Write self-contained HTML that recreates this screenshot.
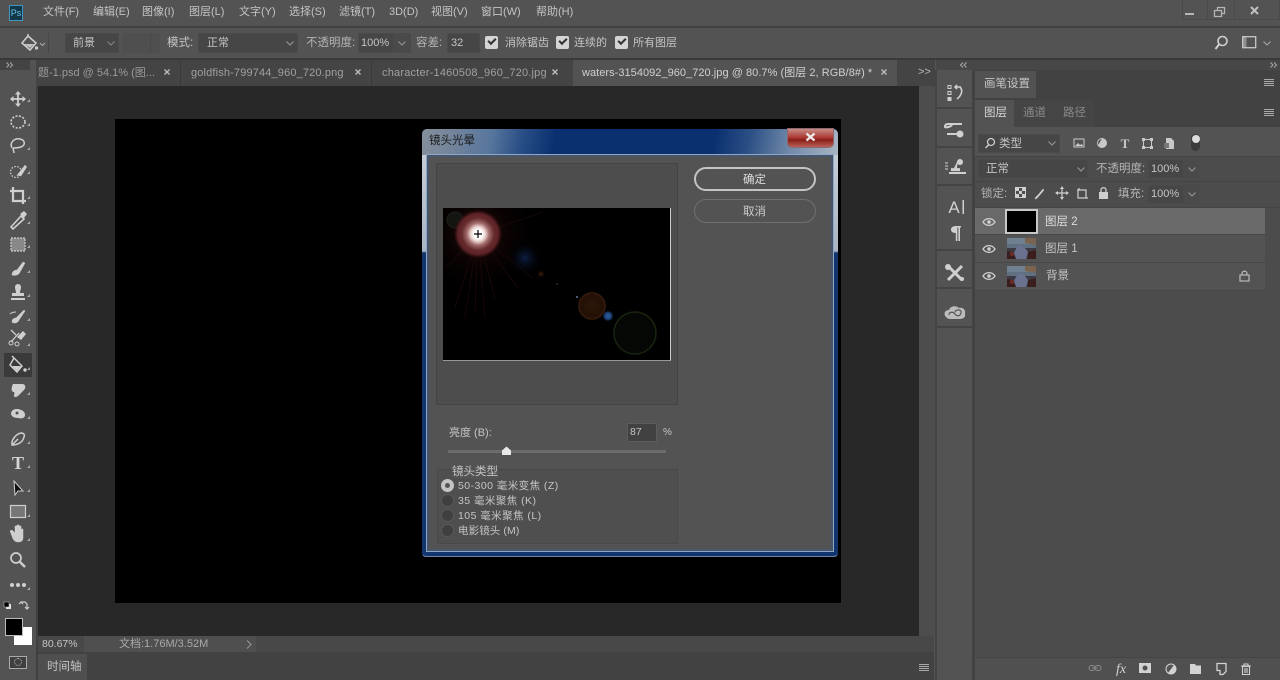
<!DOCTYPE html>
<html><head><meta charset="utf-8"><style>
html,body{margin:0;padding:0;width:1280px;height:680px;overflow:hidden;background:#535353}
body{position:relative;font-family:"Liberation Sans","Noto Sans CJK SC",sans-serif;font-size:11px;color:#c4c4c4;filter:blur(.35px)}
.a,.t{position:absolute}
.t{white-space:nowrap;line-height:14px}
svg{position:absolute;overflow:visible}
.f{background:#464646;border:1px solid #4a4a4a;box-sizing:border-box}
.ck{position:absolute;width:13px;height:13px;background:#d4d4d4;border-radius:2px}
.ck:after{content:"";position:absolute;left:3px;top:2px;width:6px;height:3px;border-left:2px solid #333;border-bottom:2px solid #333;transform:rotate(-45deg)}
.r{position:absolute;width:11px;height:11px;border-radius:50%;background:#3f3f3f;border:1px solid #585858;left:441px}
</style></head><body>

<!-- bars -->
<div class="a" style="left:0;top:26px;width:1280px;height:2px;background:#424242"></div>
<div class="a" style="left:0;top:58px;width:1280px;height:2px;background:#3a3a3a"></div>
<div class="a" style="left:0;top:60px;width:935px;height:26px;background:#444"></div>
<div class="a" style="left:936px;top:60px;width:344px;height:10px;background:#474747"></div>
<div class="a" style="left:0;top:60px;width:36px;height:620px;background:#535353"></div>
<div class="a" style="left:0;top:60px;width:30px;height:10px;background:#444"></div>
<div class="a" style="left:36px;top:86px;width:2px;height:594px;background:#404040"></div>

<!-- menu -->
<div class="a" style="left:9px;top:5px;width:14px;height:16px;background:#123848;border:1px solid #3f96c4;box-sizing:border-box;color:#6cc0e8;font-size:9px;line-height:14px;text-align:center">Ps</div>
<span class="t" style="left:43px;top:5px">文件(F)</span>
<span class="t" style="left:93px;top:5px">编辑(E)</span>
<span class="t" style="left:142px;top:5px">图像(I)</span>
<span class="t" style="left:189px;top:5px">图层(L)</span>
<span class="t" style="left:239px;top:5px">文字(Y)</span>
<span class="t" style="left:289px;top:5px">选择(S)</span>
<span class="t" style="left:339px;top:5px">滤镜(T)</span>
<span class="t" style="left:389px;top:5px">3D(D)</span>
<span class="t" style="left:431px;top:5px">视图(V)</span>
<span class="t" style="left:481px;top:5px">窗口(W)</span>
<span class="t" style="left:536px;top:5px">帮助(H)</span>
<!-- window controls -->
<div class="a" style="left:1182px;top:0;width:98px;height:20px;border:1px solid #4a4a4a;border-top:0;box-sizing:border-box"></div>
<div class="a" style="left:1207px;top:0;width:1px;height:20px;background:#4a4a4a"></div>
<div class="a" style="left:1234px;top:0;width:1px;height:20px;background:#4a4a4a"></div>
<div class="a" style="left:1185px;top:13px;width:9px;height:2px;background:#b5b5b5"></div>
<svg style="left:1213px;top:6px" width="14" height="12"><path d="M1.500 4.500h7v6h-7zM4.500 4V1.500h7v6H9" fill="none" stroke="#b5b5b5" stroke-width="1.300"/></svg>
<svg style="left:1249px;top:5px" width="12" height="12"><path d="M2 2l7 7M9 2l-7 7" stroke="#c0c0c0" stroke-width="2"/></svg>

<!-- options -->
<svg style="left:19px;top:33px" width="26" height="20"><path d="M3 10l6-7 8 7-6 7zM9 3V1" fill="none" stroke="#d0d0d0" stroke-width="1.500"/><path d="M5 11h10l-4 4z" fill="#c0c0c0"/><circle cx="17.500" cy="15" r="1.600" fill="#d0d0d0"/><path d="M21 10l2.500 2.500L26 10" fill="none" stroke="#aaa"/></svg>
<div class="a" style="left:48px;top:33px;width:1px;height:20px;background:#474747"></div>
<div class="a f" style="left:65px;top:33px;width:54px;height:20px"></div>
<span class="t" style="left:73px;top:36px;font-size:11px">前景</span>
<svg style="left:107px;top:41px" width="8" height="5"><path d="M0.500 .5L4 4l3.500-3.500" fill="none" stroke="#888"/></svg>
<div class="a" style="left:122px;top:33px;width:38px;height:20px;background:#4f4f4f"></div>
<div class="a" style="left:150px;top:33px;width:1px;height:20px;background:#484848"></div>
<span class="t" style="left:167px;top:36px;font-size:11.500px">模式:</span>
<div class="a f" style="left:198px;top:33px;width:100px;height:20px"></div>
<span class="t" style="left:207px;top:36px;font-size:11px">正常</span>
<svg style="left:286px;top:41px" width="8" height="5"><path d="M0.500 .5L4 4l3.500-3.500" fill="none" stroke="#999"/></svg>
<span class="t" style="left:306px;top:36px;font-size:11.500px;color:#b4b4b4">不透明度:</span>
<div class="a f" style="left:358px;top:33px;width:36px;height:20px"></div>
<span class="t" style="left:361px;top:36px">100%</span>
<div class="a f" style="left:394px;top:33px;width:17px;height:20px;background:#4a4a4a"></div>
<svg style="left:398px;top:41px" width="8" height="5"><path d="M0.500 .5L4 4l3.500-3.500" fill="none" stroke="#999"/></svg>
<span class="t" style="left:416px;top:36px;font-size:11.500px;color:#b4b4b4">容差:</span>
<div class="a f" style="left:447px;top:33px;width:33px;height:20px"></div>
<span class="t" style="left:451px;top:36px">32</span>
<div class="ck" style="left:485px;top:36px"></div>
<span class="t" style="left:505px;top:36px;font-size:11px">消除锯齿</span>
<div class="ck" style="left:556px;top:36px"></div>
<span class="t" style="left:574px;top:36px;font-size:11px">连续的</span>
<div class="ck" style="left:615px;top:36px"></div>
<span class="t" style="left:633px;top:36px;font-size:11px">所有图层</span>
<svg style="left:1214px;top:35px" width="16" height="16"><circle cx="8.500" cy="6" r="4.500" fill="none" stroke="#d0d0d0" stroke-width="1.600"/><path d="M5 9.500L1.500 14" stroke="#d0d0d0" stroke-width="2"/></svg>
<svg style="left:1242px;top:36px" width="16" height="13"><rect x=".7" y=".7" width="13" height="11" fill="none" stroke="#c8c8c8" stroke-width="1.300"/><rect x="1" y="1" width="3.500" height="10" fill="#c8c8c8" opacity=".5"/></svg>
<svg style="left:1263px;top:41px" width="8" height="5"><path d="M0.500 .5L4 4l3.500-3.500" fill="none" stroke="#aaa"/></svg>

<!-- tabs -->
<svg style="left:6px;top:62px" width="8" height="6"><path d="M.5.5L3 3 .5 5.500M4 .5L6.500 3 4 5.500" fill="none" stroke="#aaa"/></svg>
<div class="a" style="left:180px;top:60px;width:1px;height:26px;background:#3a3a3a"></div>
<div class="a" style="left:371px;top:60px;width:1px;height:26px;background:#3a3a3a"></div>
<span class="t" style="left:38px;top:66px;color:#9a9a9a">题-1.psd @ 54.1% (图...</span>
<svg style="left:164px;top:69px" width="6" height="6"><path d="M.5.5l5 5M5.500.5l-5 5" stroke="#bbb" stroke-width="1.400"/></svg>
<span class="t" style="left:191px;top:66px;color:#a0a0a0;letter-spacing:.15px">goldfish-799744_960_720.png</span>
<svg style="left:355px;top:69px" width="6" height="6"><path d="M.5.5l5 5M5.500.5l-5 5" stroke="#bbb" stroke-width="1.400"/></svg>
<span class="t" style="left:382px;top:66px;color:#a0a0a0;letter-spacing:.2px">character-1460508_960_720.jpg</span>
<svg style="left:552px;top:69px" width="6" height="6"><path d="M.5.5l5 5M5.500.5l-5 5" stroke="#bbb" stroke-width="1.400"/></svg>
<div class="a" style="left:573px;top:60px;width:324px;height:26px;background:#535353"></div>
<span class="t" style="left:582px;top:66px;color:#d0d0d0;letter-spacing:.04px">waters-3154092_960_720.jpg @ 80.7% (图层 2, RGB/8#) *</span>
<svg style="left:881px;top:69px" width="6" height="6"><path d="M.5.5l5 5M5.500.5l-5 5" stroke="#bbb" stroke-width="1.400"/></svg>
<span class="t" style="left:918px;top:65px;color:#bbb;font-size:11px">&gt;&gt;</span>

<!-- canvas -->
<div class="a" style="left:38px;top:86px;width:881px;height:550px;background:#282828"></div>
<div class="a" style="left:919px;top:86px;width:16px;height:550px;background:#4d4d4d"></div>
<div class="a" style="left:115px;top:119px;width:726px;height:484px;background:#000"></div>

<!-- status -->
<div class="a" style="left:38px;top:636px;width:896px;height:16px;background:#484848"></div>
<div class="a" style="left:84px;top:636px;width:172px;height:16px;background:#4f4f4f"></div>
<span class="t" style="left:42px;top:637px;font-size:10.500px">80.67%</span>
<span class="t" style="left:119px;top:637px;font-size:11px;color:#aaa">文档:1.76M/3.52M</span>
<svg style="left:246px;top:640px" width="6" height="9"><path d="M1 .5L5 4.500 1 8.500" fill="none" stroke="#999"/></svg>
<!-- timeline -->
<div class="a" style="left:38px;top:652px;width:896px;height:28px;background:#424242"></div>
<div class="a" style="left:38px;top:654px;width:49px;height:26px;background:#4f4f4f"></div>
<span class="t" style="left:47px;top:660px;font-size:11.500px">时间轴</span>
<div class="a" style="left:919px;top:664px;width:10px;height:1px;background:#aaa;box-shadow:0 2px #aaa,0 4px #aaa,0 6px #aaa"></div>

<!-- tools -->
<svg style="left:0;top:86px" width="36" height="590" fill="#cfcfcf" stroke="#cfcfcf">
<rect x="4" y="267" width="28" height="24" fill="#3a3a3a" stroke="none"/>
<!-- move -->
<path d="M18 7v12M11 13h14" stroke-width="1.800" fill="none"/><path d="M18 5l3 3.500h-6zM18 21l3-3.500h-6zM10 13l3.500-3v6zM26 13l-3.500-3v6z" stroke="none"/>
<!-- marquee -->
<ellipse cx="18" cy="36" rx="7" ry="6" fill="none" stroke-width="1.600" stroke-dasharray="2 1.500"/>
<!-- lasso -->
<path d="M12 62c-3-6 3-10 8-9 5 1 6 6 1 8-3 1-6 1-8 1" fill="none" stroke-width="1.500"/><path d="M13 62l1 5" fill="none" stroke-width="1.500"/>
<!-- quick sel -->
<circle cx="16" cy="86" r="5.500" fill="none" stroke-width="1.300" stroke-dasharray="1.500 1.500"/><path d="M18 89l7-9 1 1-5 8z" stroke-width="1.500"/>
<!-- crop -->
<path d="M13 101v14h13M10 105h13v13" fill="none" stroke-width="2.200"/>
<!-- eyedropper -->
<path d="M11 141l10-11 3 3-11 10z" fill="none" stroke-width="1.600"/><path d="M20 128l4-3 3 3-3 4z" stroke="none"/>
<!-- patch -->
<rect x="11" y="152" width="14" height="13" fill="#888" stroke-width="1.200" stroke-dasharray="2 1"/>
<!-- brush -->
<path d="M12 189c0-4 3-5 5-5l6-8 2 1-5 9c-1 3-5 4-8 3z" stroke-width=".5"/>
<!-- stamp -->
<path d="M15 201a3 3 0 1 1 6 0c0 3-1 3-1 6h4v3H12v-3h4c0-3-1-3-1-6zM11 212h14v2H11z" stroke="none"/>
<!-- history brush -->
<path d="M12 236c0-3 2-4 4-4l8-8 1 1-6 9c-1 3-5 4-7 2z" stroke-width=".5"/><path d="M10 228c2-2 4-2 6-2" fill="none" stroke-width="1"/>
<!-- eraser -->
<path d="M11 244l5 5M11 256l8-9" fill="none" stroke-width="1.300"/><circle cx="11" cy="257" r="2" fill="none"/><circle cx="17" cy="258" r="2" fill="none"/><path d="M17 251l6-6 3 3-5 6z" stroke="none"/>
<!-- bucket -->
<path d="M14 272l8 8-5 6-7-7zM14 272l-2-2" fill="none" stroke-width="1.500"/><path d="M12 280h9l-4 5z" stroke="none"/><circle cx="25" cy="284" r="1.700" stroke="none"/>
<!-- smudge -->
<path d="M13 298h9c4 0 4 4 2 6l-5 5c-2 2-4 3-5 1 0-2 1-3 0-4-3 0-3-4-1-8z" stroke="none"/>
<!-- dodge -->
<path d="M11 327c1-4 6-5 10-3 3 1 4 3 4 5 0 3-3 4-7 3-3 0-7-1-7-5z" stroke="none"/><circle cx="17" cy="327" r="1.500" fill="#535353" stroke="none"/>
<!-- pen -->
<path d="M12 359c-1-5 4-11 9-12 3 0 4 2 3 4-1 5-6 8-12 8zM12 359l6-6" fill="none" stroke-width="1.500"/>
<!-- text -->
<text x="18" y="383" fill="#d4d4d4" stroke="none" font-family="Liberation Serif" font-size="18" font-weight="700" text-anchor="middle">T</text>
<!-- path sel -->
<path d="M14 395l1 14 3-4 5 0z" fill="#111" stroke="#cfcfcf"/>
<!-- rect -->
<rect x="10.500" y="419.500" width="15" height="12" fill="#777" stroke-width="1.200"/>
<!-- hand -->
<path d="M12 450l-2-5 2-1 3 3v-7h2v5-6h2v6-5h2v6-3h2v9c0 3-2 4-5 4-3 0-5-2-6-6z" stroke-width=".5"/>
<!-- zoom -->
<circle cx="16" cy="472" r="5" fill="none" stroke-width="1.700"/><path d="M20 476l5 5" stroke-width="2.400"/>
<!-- dots -->
<circle cx="12" cy="499" r="2" stroke="none"/><circle cx="18" cy="499" r="2" stroke="none"/><circle cx="24" cy="499" r="2" stroke="none"/>
<!-- mini colours -->
<rect x="6" y="518" width="5" height="5" fill="#e4e4e4" stroke="none"/><rect x="4" y="516" width="5" height="5" fill="#000" stroke="#ccc" stroke-width=".5"/>
<path d="M21 518h4l2 2v5M19 520l2-2 2 2M25 523l2 2 2-2" fill="none" stroke-width="1.200" transform="translate(0 -2)"/>
</svg>
<!-- fast resize triangles -->
<svg style="left:0;top:86px" width="36" height="560" fill="#aaa"><path d="M30 16v-3l-3 3zM30 40v-3l-3 3zM30 64v-3l-3 3zM30 88v-3l-3 3zM30 113v-3l-3 3zM30 138v-3l-3 3zM30 162v-3l-3 3zM30 187v-3l-3 3zM30 211v-3l-3 3zM30 235v-3l-3 3zM30 260v-3l-3 3zM30 284v-3l-3 3zM30 309v-3l-3 3zM30 333v-3l-3 3zM30 358v-3l-3 3zM30 382v-3l-3 3zM30 406v-3l-3 3zM30 431v-3l-3 3zM30 455v-3l-3 3zM30 504v-3l-3 3z"/></svg>
<div class="a" style="left:14px;top:627px;width:18px;height:18px;background:#fff"></div>
<div class="a" style="left:5px;top:618px;width:16px;height:16px;background:#000;border:1px solid #bbb"></div>
<div class="a" style="left:9px;top:656px;width:16px;height:11px;border:1px solid #aaa;background:#3f3f3f"></div>
<div class="a" style="left:14px;top:658px;width:6px;height:6px;border:1px dotted #bbb;border-radius:50%"></div>

<!-- dock -->
<div class="a" style="left:935px;top:70px;width:2px;height:610px;background:#444"></div>
<div class="a" style="left:972px;top:70px;width:3px;height:610px;background:#424242"></div>
<div class="a" style="left:937px;top:107px;width:35px;height:2px;background:#444"></div>
<div class="a" style="left:937px;top:146px;width:35px;height:2px;background:#444"></div>
<div class="a" style="left:937px;top:184px;width:35px;height:2px;background:#444"></div>
<div class="a" style="left:937px;top:249px;width:35px;height:2px;background:#444"></div>
<div class="a" style="left:937px;top:287px;width:35px;height:2px;background:#444"></div>
<div class="a" style="left:937px;top:326px;width:35px;height:2px;background:#444"></div>
<svg style="left:937px;top:70px" width="36" height="260" fill="#d0d0d0" stroke="#d0d0d0">
<path d="M11 15.500h3v3h-3zM11 21.500h3v3h-3z" fill="none"/><rect x="10.500" y="27" width="4" height="4" stroke="none"/><path d="M18 17h6M20 15l-2 2 2 2M23 17c3 3 2 8-3 12" fill="none" stroke-width="1.600"/>
<path d="M11 54h14M8 57c0-2 1-3 3-3h4c0 3-7 4-7 3zM10 64h10" stroke-width="2" fill="none"/><circle cx="23" cy="64" r="3.500" stroke="none"/>
<path d="M8 93h3M8 96h3M8 99h3" fill="none"/><path d="M20 92a3 3 0 1 1 0 .1c1 3 0 3 0 6h3v3h-9v-3h3" stroke="none"/><rect x="12" y="102" width="17" height="2" stroke="none"/>
<text x="17" y="143" stroke="none" font-size="17" text-anchor="middle" fill="#d0d0d0">A</text><rect x="25.500" y="130" width="1.500" height="14" stroke="none"/>
<path d="M19 156h5v1.500h-1V171h-1.600v-13.500h-1V171h-1.600v-8c-3.500 0-4.800-1.500-4.800-3.500s1.800-3.500 5-3.500z" stroke="none"/>
<path d="M11 196l14 14M25 196l-14 14" stroke-width="3" fill="none"/><circle cx="11" cy="197" r="3" stroke="none"/><circle cx="25" cy="209" r="2" stroke="none"/>
<path d="M9 247c-3-3-1-7 3-7 1-4 7-5 10-2 4-1 7 2 6 6 1 3-2 5-5 5H13c-2 0-3-1-4-2z" fill="#bbb" stroke="none"/><path d="M12 245c0-4 5-3 6-1s5 3 6-1-5-4-6-1" fill="none" stroke="#555" stroke-width="1.200"/>
</svg>

<!-- right panel -->
<div class="a" style="left:975px;top:70px;width:305px;height:610px;background:#4c4c4c"></div>
<div class="a" style="left:975px;top:70px;width:305px;height:29px;background:#424242"></div>
<div class="a" style="left:975px;top:71px;width:61px;height:27px;background:#525252"></div>
<span class="t" style="left:984px;top:77px;font-size:11.500px">画笔设置</span>
<div class="a" style="left:975px;top:99px;width:305px;height:28px;background:#424242"></div>
<div class="a" style="left:975px;top:100px;width:39px;height:27px;background:#535353"></div>
<div class="a" style="left:1014px;top:100px;width:40px;height:27px;background:#454545"></div>
<div class="a" style="left:1054px;top:100px;width:40px;height:27px;background:#454545"></div>
<span class="t" style="left:984px;top:106px;font-size:11.500px;color:#d4d4d4">图层</span>
<span class="t" style="left:1023px;top:106px;font-size:11.500px;color:#8a8a8a">通道</span>
<span class="t" style="left:1063px;top:106px;font-size:11.500px;color:#8a8a8a">路径</span>
<div class="a" style="left:1264px;top:79px;width:10px;height:1px;background:#aaa;box-shadow:0 2px #aaa,0 4px #aaa,0 6px #aaa"></div>
<div class="a" style="left:1264px;top:109px;width:10px;height:1px;background:#aaa;box-shadow:0 2px #aaa,0 4px #aaa,0 6px #aaa"></div>
<svg style="left:1270px;top:62px" width="8" height="6"><path d="M.5.5L3 3 .5 5.500M4 .5L6.500 3 4 5.500" fill="none" stroke="#aaa"/></svg>
<svg style="left:960px;top:62px" width="8" height="6"><path d="M3 .5L.5 3 3 5.500M6.500 .5L4 3l2.500 2.500" fill="none" stroke="#aaa"/></svg>

<div class="a" style="left:975px;top:127px;width:305px;height:29px;background:#535353"></div>
<div class="a f" style="left:978px;top:134px;width:82px;height:19px"></div>
<svg style="left:984px;top:137px" width="12" height="12"><circle cx="7" cy="5" r="3.500" fill="none" stroke="#ccc" stroke-width="1.300"/><path d="M4.500 8L1.500 11" stroke="#ccc" stroke-width="1.500"/></svg>
<span class="t" style="left:999px;top:137px;font-size:11.500px">类型</span>
<svg style="left:1048px;top:141px" width="8" height="5"><path d="M0.500 .5L4 4l3.500-3.500" fill="none" stroke="#999"/></svg>
<svg style="left:1073px;top:137px" width="130" height="18" fill="#c8c8c8" stroke="#c8c8c8">
<rect x="1" y="2" width="10" height="8" fill="none"/><path d="M2 9l3-3 2 2 2-1 1 2z" stroke="none"/>
<circle cx="29" cy="6" r="4.500" fill="#555"/><path d="M29 1.500a4.500 4.500 0 0 1 0 9c-3 0-4-2-4-2z" stroke="none"/>
<text x="52" y="11" stroke="none" font-family="Liberation Serif" font-weight="700" font-size="13" text-anchor="middle">T</text>
<rect x="70.500" y="2.500" width="8" height="8" fill="none"/><path d="M69 1h3v3h-3zM77 1h3v3h-3zM69 9h3v3h-3zM77 9h3v3h-3z" stroke="none"/>
<path d="M93 1h5l3 3v8h-8z" stroke="none"/><rect x="91" y="6" width="5" height="5" fill="#777" stroke="none"/>
</svg>
<div class="a" style="left:1191px;top:134px;width:9px;height:17px;border-radius:5px;background:#3c3c3c"></div>
<div class="a" style="left:1192px;top:135px;width:8px;height:8px;border-radius:50%;background:#ddd"></div>

<div class="a" style="left:975px;top:156px;width:305px;height:1px;background:#444"></div>
<div class="a f" style="left:978px;top:159px;width:110px;height:19px"></div>
<span class="t" style="left:986px;top:162px;font-size:11.500px">正常</span>
<svg style="left:1077px;top:167px" width="8" height="5"><path d="M0.500 .5L4 4l3.500-3.500" fill="none" stroke="#999"/></svg>
<span class="t" style="left:1096px;top:162px;font-size:11.500px;color:#b4b4b4">不透明度:</span>
<div class="a f" style="left:1148px;top:159px;width:36px;height:19px"></div>
<span class="t" style="left:1151px;top:162px">100%</span>
<div class="a f" style="left:1184px;top:159px;width:15px;height:19px;background:#4a4a4a"></div>
<svg style="left:1188px;top:167px" width="8" height="5"><path d="M0.500 .5L4 4l3.500-3.500" fill="none" stroke="#999"/></svg>
<div class="a" style="left:975px;top:181px;width:305px;height:1px;background:#444"></div>
<span class="t" style="left:981px;top:187px;font-size:11.500px;color:#b4b4b4">锁定:</span>
<svg style="left:1015px;top:186px" width="100" height="16" fill="#cfcfcf" stroke="#cfcfcf">
<rect x=".5" y="1.500" width="10" height="10" fill="none"/><path d="M1 2h3v3H1zM7 2h3v3H7zM4 5h3v3H4zM1 8h3v3H1zM7 8h3v3H7z" stroke="none"/>
<path d="M20 13c1-3 2-3 3-4l5-6 1 1-5 6c-1 1-2 3-4 3z" stroke-width=".5"/>
<path d="M47 2v10M42 7h10" stroke-width="1.200" fill="none"/><path d="M47 0l2 3h-4zM47 14l2-3h-4zM40 7l3-2v4zM54 7l-3-2v4z" stroke="none"/>
<path d="M62 4h9v8h-8V4M64 2v2M73 12h-3" fill="none" stroke-width="1.200"/>
<rect x="84" y="6" width="9" height="7" stroke="none"/><path d="M86 6V4c0-3 5-3 5 0v2" fill="none" stroke-width="1.300"/>
</svg>
<span class="t" style="left:1118px;top:187px;font-size:11.500px;color:#b4b4b4">填充:</span>
<div class="a f" style="left:1148px;top:185px;width:36px;height:19px"></div>
<span class="t" style="left:1151px;top:187px">100%</span>
<div class="a f" style="left:1184px;top:185px;width:15px;height:19px;background:#4a4a4a"></div>
<svg style="left:1188px;top:192px" width="8" height="5"><path d="M0.500 .5L4 4l3.500-3.500" fill="none" stroke="#999"/></svg>

<!-- layers -->
<div class="a" style="left:975px;top:207px;width:305px;height:1px;background:#444"></div>
<div class="a" style="left:975px;top:208px;width:290px;height:26px;background:#696969"></div>
<div class="a" style="left:975px;top:235px;width:290px;height:27px;background:#535353"></div>
<div class="a" style="left:975px;top:262px;width:290px;height:28px;background:#535353"></div>
<div class="a" style="left:975px;top:234px;width:290px;height:1px;background:#474747"></div>
<div class="a" style="left:975px;top:262px;width:290px;height:1px;background:#474747"></div>
<div class="a" style="left:975px;top:290px;width:290px;height:1px;background:#474747"></div>
<div class="a" style="left:1005px;top:209px;width:33px;height:25px;background:#000;border:2px solid #c8c8c8;box-sizing:border-box"></div>
<svg style="left:1007px;top:238px" width="29" height="21"><rect width="29" height="21" fill="#5f7080"/><path d="M0 0h29v6H0z" fill="#6f8090"/><path d="M18 0h11v7l-11-2z" fill="#7a6450"/><path d="M0 10h29v11H0z" fill="#3e3a44"/><path d="M10 9l4-2 4 3 3 4-2 7H9l-2-6z" fill="#6a7290"/><path d="M0 13l6 1 3 7H0zM21 14l8-2v9h-8z" fill="#3a1e1e"/><circle cx="5" cy="16" r="2" fill="#6e2c26"/></svg>
<svg style="left:1007px;top:266px" width="29" height="21"><rect width="29" height="21" fill="#5f7080"/><path d="M0 0h29v6H0z" fill="#6f8090"/><path d="M18 0h11v7l-11-2z" fill="#7a6450"/><path d="M0 10h29v11H0z" fill="#3e3a44"/><path d="M10 9l4-2 4 3 3 4-2 7H9l-2-6z" fill="#6a7290"/><path d="M0 13l6 1 3 7H0zM21 14l8-2v9h-8z" fill="#3a1e1e"/><circle cx="5" cy="16" r="2" fill="#6e2c26"/></svg>
<svg style="left:982px;top:215px" width="14" height="70" fill="none" stroke="#d0d0d0" stroke-width="1.300"><path d="M1 7c3-4.500 9-4.500 12 0-3 4.500-9 4.500-12 0z"/><circle cx="7" cy="7" r="1.800" fill="#d0d0d0" stroke="none"/><path d="M1 34c3-4.500 9-4.500 12 0-3 4.500-9 4.500-12 0z"/><circle cx="7" cy="34" r="1.800" fill="#d0d0d0" stroke="none"/><path d="M1 61c3-4.500 9-4.500 12 0-3 4.500-9 4.500-12 0z"/><circle cx="7" cy="61" r="1.800" fill="#d0d0d0" stroke="none"/></svg>
<span class="t" style="left:1045px;top:215px;font-size:11.500px;color:#ddd">图层 2</span>
<span class="t" style="left:1045px;top:242px;font-size:11.500px">图层 1</span>
<span class="t" style="left:1046px;top:269px;font-size:11.500px">背景</span>
<svg style="left:1239px;top:270px" width="11" height="12"><rect x="1" y="5" width="9" height="6" fill="none" stroke="#bbb" stroke-width="1.200"/><path d="M3 5V3.500c0-3 5-3 5 0V5" fill="none" stroke="#bbb" stroke-width="1.200"/></svg>

<!-- bottom panel icons -->
<div class="a" style="left:975px;top:657px;width:305px;height:1px;background:#454545"></div>
<div class="a" style="left:975px;top:658px;width:305px;height:22px;background:#505050"></div>
<svg style="left:1088px;top:662px" width="170" height="16" fill="#d2d2d2" stroke="#d2d2d2">
<rect x="1" y="3.500" width="6" height="5" rx="2.500" fill="none" stroke="#8a8a8a"/><rect x="7" y="3.500" width="6" height="5" rx="2.500" fill="none" stroke="#8a8a8a"/><path d="M4 6h6" stroke="#8a8a8a"/>
<text x="33" y="11" stroke="none" font-family="Liberation Serif" font-style="italic" font-size="14" text-anchor="middle">fx</text>
<path fill-rule="evenodd" d="M51 1h12v10H51zM57 3.500a2.500 2.500 0 1 0 .1 0z" stroke="none"/>
<circle cx="83" cy="7" r="5" fill="#555"/><path d="M86 3a5 5 0 0 1-6 8z" stroke="none"/>
<path d="M102 2h5l1 1.500h5V12h-11z" stroke="none"/>
<path d="M129 1.500h9v8l-3 3h-3l0-4h-3z M129 1.500v7" fill="none" stroke-width="1.300"/>
<path d="M153 4h10M156 4V2h4v2M154.500 4.500h7v8h-7zM157 6v5M159 6v5" fill="none" stroke-width="1.100"/>
</svg>

<!-- dialog -->
<div class="a" style="left:422px;top:129px;width:416px;height:428px;border-radius:5px 5px 4px 4px;background:#12356e;box-shadow:inset 0 0 0 1px #6d86a8;overflow:hidden">
 <div class="a" style="left:0;top:0;width:416px;height:26px;background:linear-gradient(100deg,#858f9c 0,#72849b 8%,#57759c 17%,#2a4f86 24%,#0a3070 32%,#0a3070 70%,#2a4e84 78%,#6f88a8 88%,#a9b6c4 100%)"></div>
 <div class="a" style="left:0;top:26px;width:5px;height:400px;background:linear-gradient(#c4ccd6 0,#aab6c5 24%,#12356e 24.500%,#12356e 100%)"></div>
 <div class="a" style="left:411px;top:26px;width:5px;height:400px;background:linear-gradient(#c4ccd6 0,#aab6c5 24%,#12356e 24.500%,#12356e 100%)"></div>
 <div class="a" style="left:4px;top:25px;width:408px;height:398px;background:#535353;border:1px solid #8ea6c2;box-sizing:border-box;box-shadow:inset 0 0 0 2px #45566e"></div>
</div>
<span class="t" style="left:429px;top:134px;font-size:11.500px;color:#1c1c1c">镜头光晕</span>
<div class="a" style="left:788px;top:129px;width:45px;height:18px;border-radius:0 0 4px 4px;background:linear-gradient(#c98a85 0,#a9352f 50%,#8a1d18 60%,#b85f58 100%);box-shadow:0 0 0 1px #8a6a70"></div>
<svg style="left:805px;top:132px" width="11" height="10"><path d="M1.500 1.500l8 7M9.500 1.500l-8 7" stroke="#eee" stroke-width="2.200"/></svg>

<div class="a" style="left:436px;top:163px;width:242px;height:242px;background:#4d4d4d;border:1px solid #444;box-sizing:border-box"></div>
<div class="a" style="left:443px;top:208px;width:228px;height:153px;background:#000;border-right:1px solid #ccc;border-bottom:1px solid #999;box-sizing:border-box;overflow:hidden">
 <svg width="228" height="153" style="left:0;top:0">
  <defs>
   <radialGradient id="fl"><stop offset="0" stop-color="#fff"/><stop offset=".18" stop-color="#fff"/><stop offset=".3" stop-color="#e8d0cc"/><stop offset=".45" stop-color="#a06a6a"/><stop offset=".65" stop-color="#642a2c"/><stop offset=".82" stop-color="#5c2226"/><stop offset="1" stop-color="#1a0506" stop-opacity="0"/></radialGradient>
   <radialGradient id="gl"><stop offset="0" stop-color="#2c0c0c" stop-opacity=".9"/><stop offset="1" stop-color="#000" stop-opacity="0"/></radialGradient>
   <radialGradient id="bl"><stop offset="0" stop-color="#0e2046"/><stop offset="1" stop-color="#000" stop-opacity="0"/></radialGradient>
   <radialGradient id="or"><stop offset="0" stop-color="#2e1608"/><stop offset=".75" stop-color="#221006"/><stop offset=".88" stop-color="#3a1c0c"/><stop offset="1" stop-color="#000" stop-opacity="0"/></radialGradient>
   <radialGradient id="bd"><stop offset="0" stop-color="#2c5fa8"/><stop offset=".6" stop-color="#1c3f70"/><stop offset="1" stop-color="#000" stop-opacity="0"/></radialGradient>
   <radialGradient id="sm"><stop offset="0" stop-color="#48200c"/><stop offset="1" stop-color="#000" stop-opacity="0"/></radialGradient>
  </defs>
  <circle cx="35" cy="26" r="62" fill="url(#gl)"/>
  <g stroke="#1e0a0a" stroke-width=".7"><path d="M35 26L12 100M35 26L22 110M35 26L32 105M35 26L42 110M35 26L52 90M35 26L75 80M35 26L90 70M35 26L3 60M35 26L100 4"/></g>
  <circle cx="12" cy="12" r="8" fill="#141410" stroke="#20201a"/>
  <circle cx="35" cy="26" r="25" fill="url(#fl)"/>
  <circle cx="82" cy="50" r="17" fill="url(#bl)"/>
  <circle cx="98" cy="66" r="5" fill="url(#sm)"/>
  <circle cx="114" cy="76" r=".8" fill="#444"/>
  <circle cx="134" cy="89" r="1" fill="#5a7a9a"/>
  <circle cx="149" cy="98" r="15" fill="url(#or)"/>
  <circle cx="165" cy="108" r="6" fill="url(#bd)"/>
  <circle cx="192" cy="125" r="21" fill="#040703" stroke="#182510" stroke-width="1.500"/>
  <path d="M-4-.6h8v1.200h-8zM-.6-4h1.200v8h-1.200z" fill="#000" transform="translate(35 26)"/>
 </svg>
</div>

<div class="a" style="left:694px;top:167px;width:122px;height:24px;border:2px solid #c4c4c4;border-radius:12px;box-sizing:border-box"></div>
<span class="t" style="left:743px;top:173px;font-size:11.500px;color:#ddd">确定</span>
<div class="a" style="left:694px;top:199px;width:122px;height:24px;border:1px solid #707070;border-radius:12px;box-sizing:border-box"></div>
<span class="t" style="left:743px;top:205px;font-size:11.500px;color:#ccc">取消</span>

<span class="t" style="left:449px;top:426px;font-size:11px">亮度 (B):</span>
<div class="a" style="left:627px;top:423px;width:30px;height:19px;background:#414141;border:1px solid #5c5c5c;box-sizing:border-box"></div>
<span class="t" style="left:630px;top:425px;font-size:10.500px">87</span>
<span class="t" style="left:663px;top:426px;font-size:10px">%</span>
<div class="a" style="left:448px;top:450px;width:218px;height:3px;background:#6c6c6c"></div>
<svg style="left:501px;top:446px" width="11" height="10"><path d="M5.500 .5L10 4.500V9H1V4.500z" fill="#e8e8e8"/></svg>
<div class="a" style="left:437px;top:469px;width:241px;height:75px;border:1px solid #484848;box-sizing:border-box;background:#4f4f4f"></div>
<span class="t" style="left:451px;top:465px;background:#535353;padding:0 1px;font-size:11.500px">镜头类型</span>
<div class="r" style="top:479px;background:#c4c4c4;border-color:#c4c4c4"></div>
<div class="a" style="left:445px;top:483px;width:5px;height:5px;border-radius:50%;background:#555"></div>
<div class="r" style="top:494px"></div><div class="r" style="top:509px"></div><div class="r" style="top:524px"></div>
<span class="t" style="left:458px;top:479px;font-size:10.500px;letter-spacing:.45px">50-300 毫米变焦 (Z)</span>
<span class="t" style="left:458px;top:494px;font-size:10.500px;letter-spacing:.45px">35 毫米聚焦 (K)</span>
<span class="t" style="left:458px;top:509px;font-size:10.500px;letter-spacing:.45px">105 毫米聚焦 (L)</span>
<span class="t" style="left:458px;top:524px;font-size:10.500px;letter-spacing:.1px">电影镜头 (M)</span>

</body></html>
